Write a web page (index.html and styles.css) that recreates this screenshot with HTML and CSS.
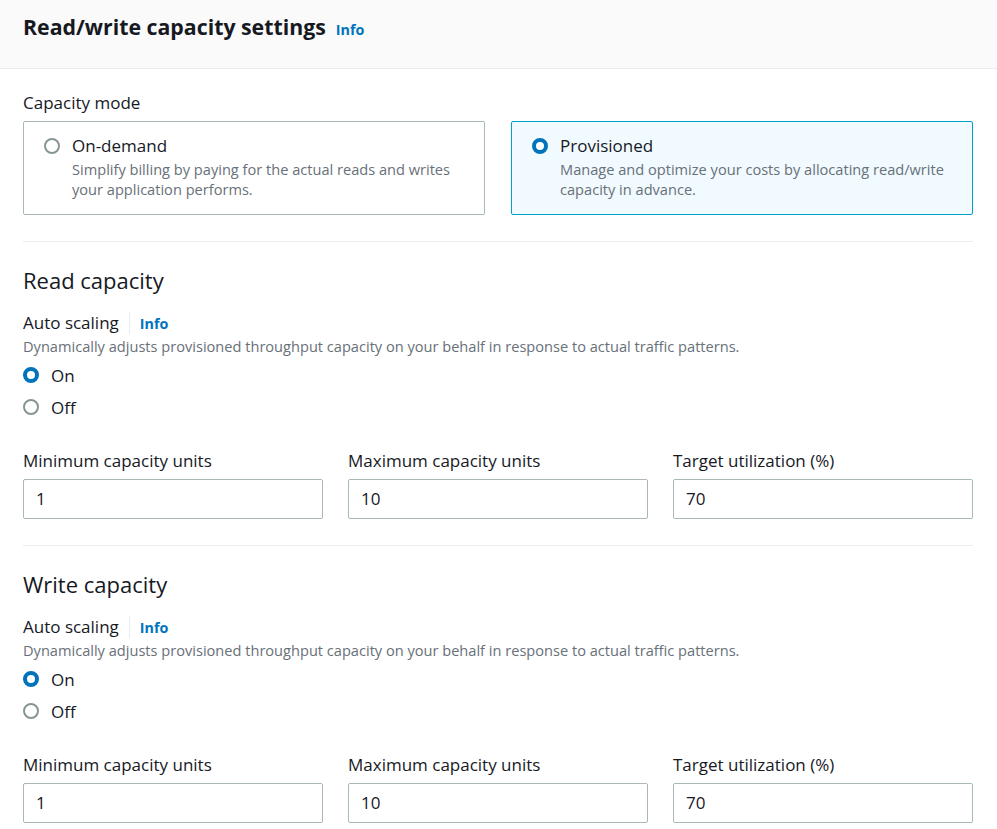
FILE: index.html
```html
<!DOCTYPE html>
<html lang="en">
<head>
<meta charset="utf-8">
<title>Read/write capacity settings</title>
<link rel="stylesheet" href="styles.css">
</head>
<body>
<div class="panel">
  <div class="panel-header">
    <h2 class="panel-title">Read/write capacity settings</h2>
    <a class="info-link" href="#">Info</a>
  </div>
  <div class="panel-body">
    <div class="field-label">Capacity mode</div>
    <div class="tiles">
      <label class="tile">
        <span class="radio"></span>
        <span class="tile-text">
          <span class="tile-title">On-demand</span>
          <span class="tile-desc">Simplify billing by paying for the actual reads and writes your application performs.</span>
        </span>
      </label>
      <label class="tile tile-selected">
        <span class="radio radio-checked"></span>
        <span class="tile-text">
          <span class="tile-title">Provisioned</span>
          <span class="tile-desc">Manage and optimize your costs by allocating read/write capacity in advance.</span>
        </span>
      </label>
    </div>

    <div class="divider"></div>

    <section class="cap-section">
      <h3 class="section-title">Read capacity</h3>
      <div class="label-row">
        <span class="field-label-inline">Auto scaling</span>
        <a class="info-link small" href="#">Info</a>
      </div>
      <div class="field-desc">Dynamically adjusts provisioned throughput capacity on your behalf in response to actual traffic patterns.</div>
      <div class="radio-group">
        <div class="radio-row"><span class="radio radio-checked"></span><span>On</span></div>
        <div class="radio-row"><span class="radio"></span><span>Off</span></div>
      </div>
      <div class="fields">
        <div class="field">
          <div class="field-label">Minimum capacity units</div>
          <div class="input">1</div>
        </div>
        <div class="field">
          <div class="field-label">Maximum capacity units</div>
          <div class="input">10</div>
        </div>
        <div class="field">
          <div class="field-label">Target utilization (%)</div>
          <div class="input">70</div>
        </div>
      </div>
    </section>

    <div class="divider"></div>

    <section class="cap-section">
      <h3 class="section-title">Write capacity</h3>
      <div class="label-row">
        <span class="field-label-inline">Auto scaling</span>
        <a class="info-link small" href="#">Info</a>
      </div>
      <div class="field-desc">Dynamically adjusts provisioned throughput capacity on your behalf in response to actual traffic patterns.</div>
      <div class="radio-group">
        <div class="radio-row"><span class="radio radio-checked"></span><span>On</span></div>
        <div class="radio-row"><span class="radio"></span><span>Off</span></div>
      </div>
      <div class="fields">
        <div class="field">
          <div class="field-label">Minimum capacity units</div>
          <div class="input">1</div>
        </div>
        <div class="field">
          <div class="field-label">Maximum capacity units</div>
          <div class="input">10</div>
        </div>
        <div class="field">
          <div class="field-label">Target utilization (%)</div>
          <div class="input">70</div>
        </div>
      </div>
    </section>
  </div>
</div>
</body>
</html>
```

FILE: styles.css
```css
* { box-sizing: border-box; }
html, body {
  margin: 0;
  padding: 0;
  background: #ffffff;
}
body {
  font-family: "Open Sans", "Liberation Sans", Arial, sans-serif;
  color: #16191f;
  font-size: 14.6px;
}
.panel-header {
  background: #fafafa;
  border-bottom: 1px solid #eaeded;
  height: 69px;
  padding: 14px 23px 0;
  display: flex;
  align-items: baseline;
  gap: 10px;
}
.panel-title {
  margin: 0;
  font-size: 21.3px;
  line-height: 26px;
  font-weight: 700;
}
.info-link {
  color: #0073bb;
  font-weight: 700;
  font-size: 14.3px;
  text-decoration: none;
}
.panel-body {
  padding: 23px 24px 0 23px;
}
.field-label {
  font-size: 17px;
  line-height: 22px;
}
.tiles {
  margin-top: 7px;
  display: grid;
  grid-template-columns: 1fr 1fr;
  gap: 26px;
}
.tile {
  border: 1px solid #aab7b8;
  border-radius: 2px;
  padding: 13px 20px 14px;
  display: flex;
  gap: 12px;
  height: 94px;
}
.tile-selected {
  background: #f1faff;
  border-color: #00a1c9;
}
.tile-text {
  display: flex;
  flex-direction: column;
}
.tile-title {
  font-size: 17px;
  line-height: 22px;
  margin-top: 0;
}
.tile-desc {
  font-size: 14.6px;
  line-height: 20px;
  color: #687078;
  margin-top: 2px;
}
.radio {
  flex: none;
  width: 16px;
  height: 16px;
  border-radius: 50%;
  border: 2px solid #879596;
  background: #fff;
  margin-top: 3px;
}
.radio-checked {
  border: 4px solid #0073bb;
  background: #fff;
}
.divider {
  height: 1px;
  background: #eaeded;
  margin: 26px 0 24px;
}
.section-title {
  margin: 0;
  font-size: 22px;
  line-height: 28px;
  font-weight: 400;
}
.label-row {
  margin-top: 18px;
  display: flex;
  align-items: center;
  height: 22px;
}
.field-label-inline {
  font-size: 17px;
  line-height: 22px;
  padding-right: 10px;
  border-right: 1px solid #eaeded;
}
.info-link.small {
  padding-left: 10px;
}
.field-desc {
  margin-top: 2px;
  font-size: 14.6px;
  line-height: 20px;
  color: #687078;
}
.radio-group {
  margin-top: 7px;
  display: flex;
  flex-direction: column;
  gap: 8px;
}
.radio-row {
  display: flex;
  align-items: center;
  gap: 12px;
  height: 24px;
  font-size: 17px;
}
.radio-row .radio {
  margin-top: 0;
}
.fields {
  margin-top: 31px;
  display: grid;
  grid-template-columns: 1fr 1fr 1fr;
  gap: 25px;
}
.input {
  margin-top: 7px;
  height: 40px;
  border: 1px solid #aab7b8;
  border-radius: 2px;
  padding: 0 12px;
  font-size: 17px;
  line-height: 38px;
}
```
